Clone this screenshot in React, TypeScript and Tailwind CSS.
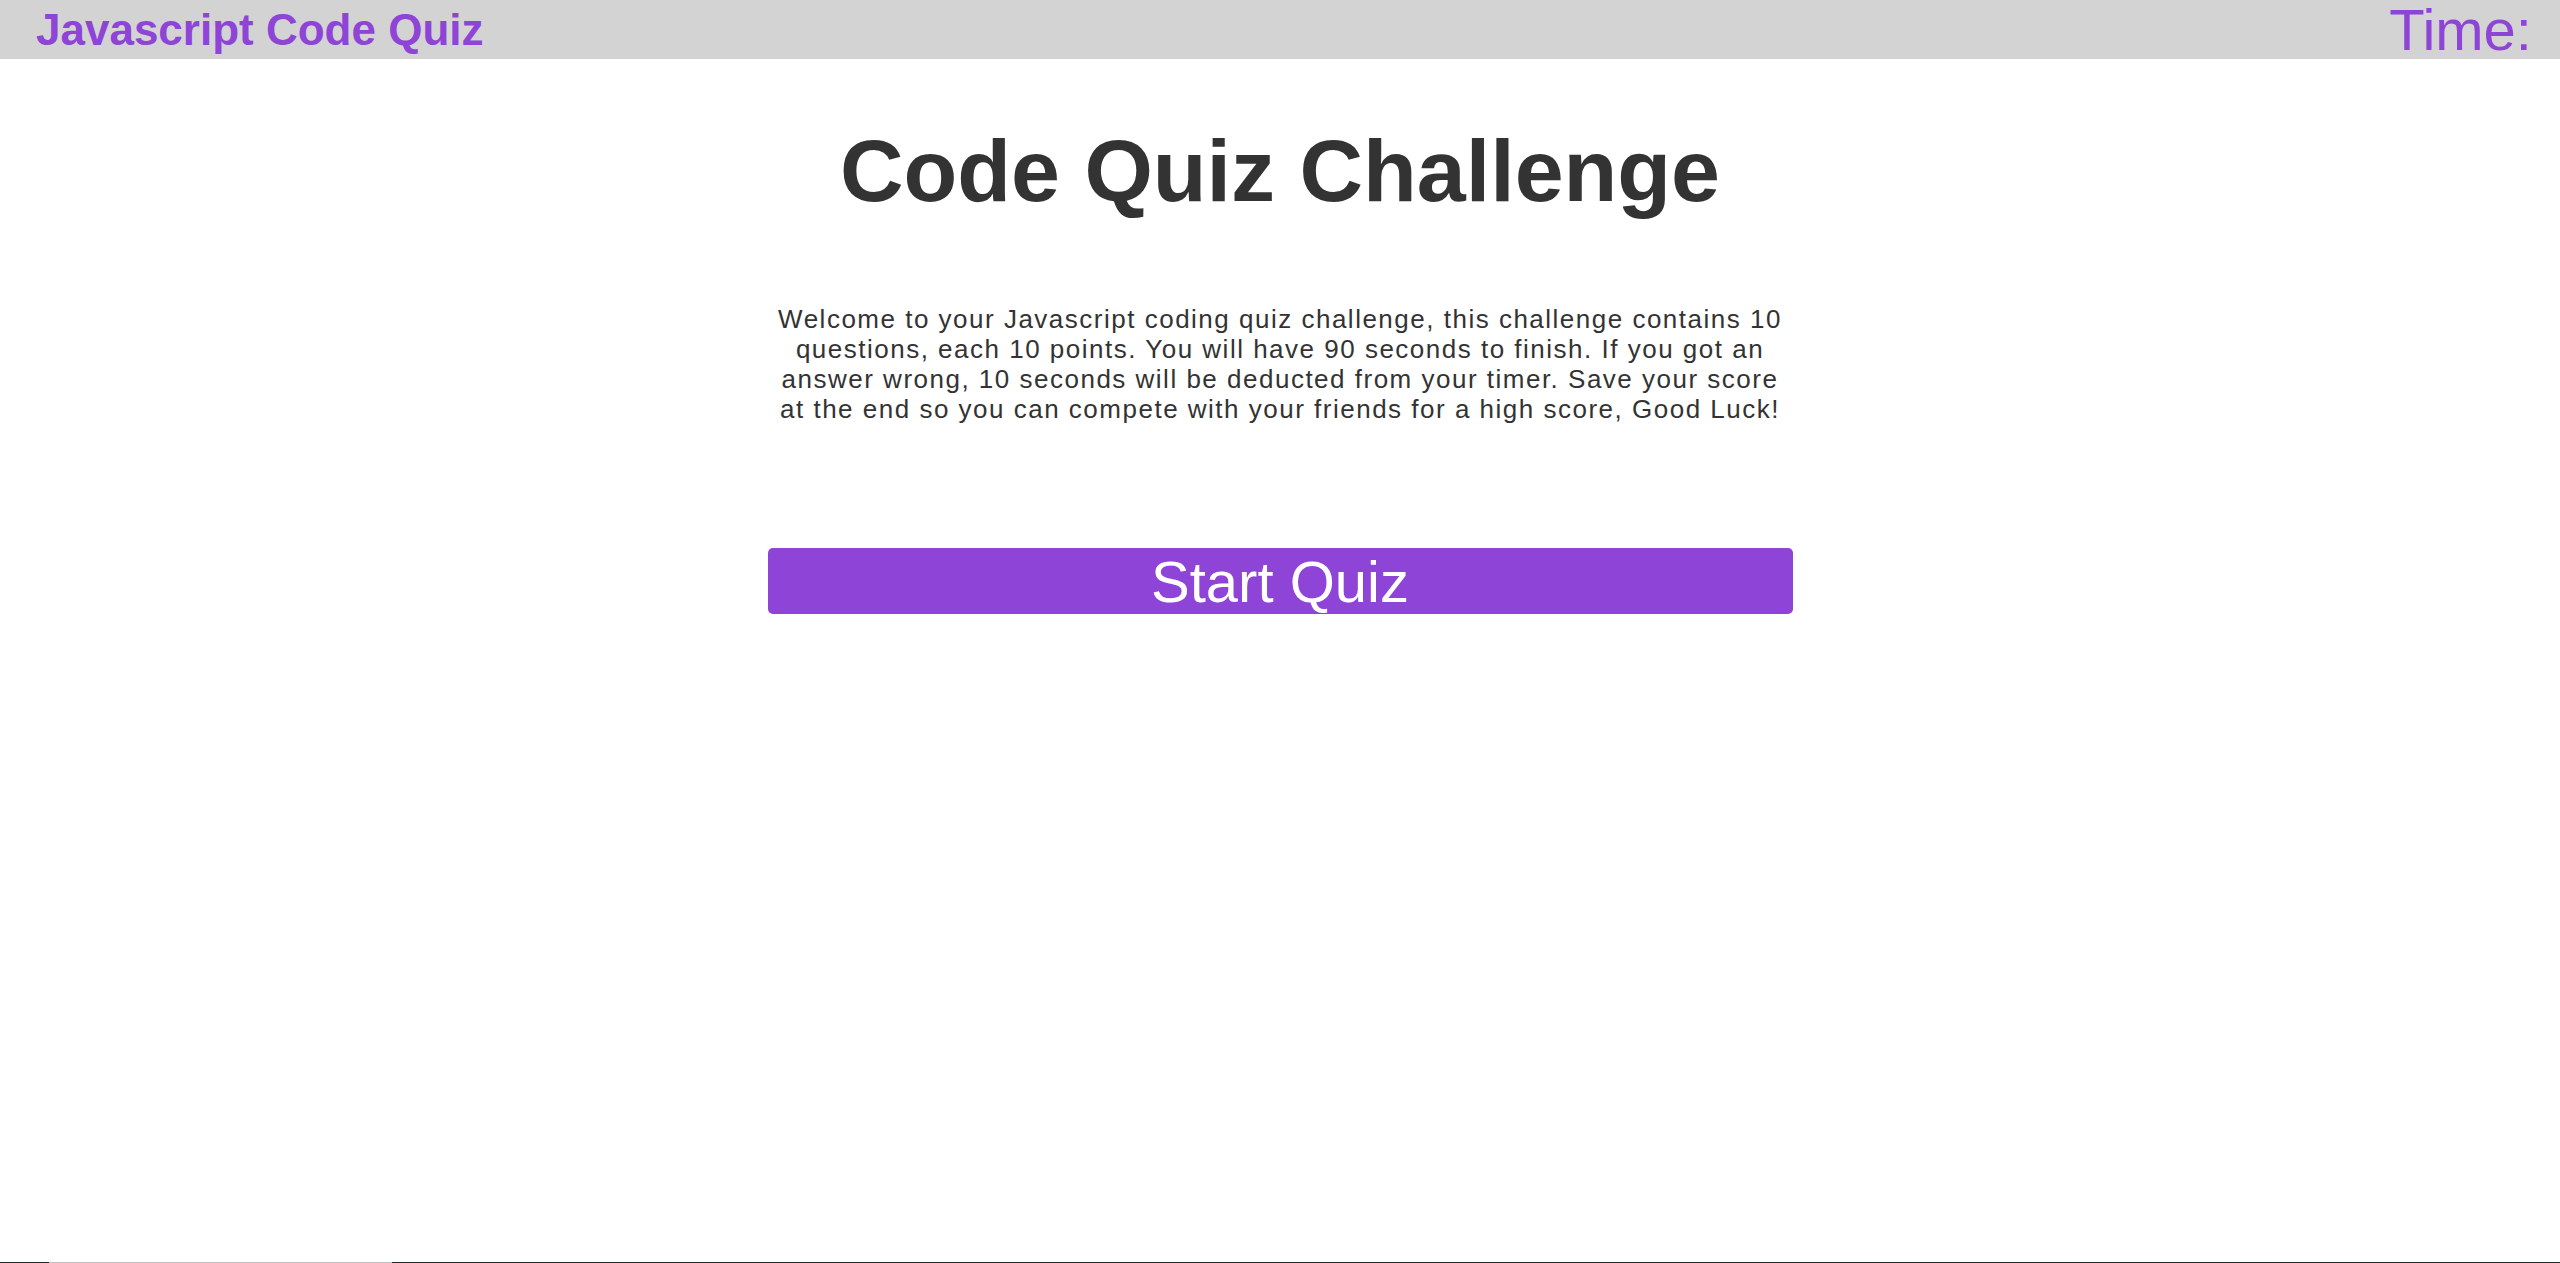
import React from "react";

export default function App() {
  return (
    <div className="min-h-screen flex flex-col bg-white" style={{ fontFamily: '"Liberation Sans", Arial, sans-serif' }}>
      <header className="h-[59px] bg-[#d3d3d3] flex items-center justify-between pl-[36px] pr-[28px] overflow-visible">
        <span className="text-[44px] font-bold text-[#8e44d6] leading-[normal] whitespace-nowrap">Javascript Code Quiz</span>
        <span className="text-[58px] text-[#8e44d6] leading-[normal] whitespace-nowrap">Time:</span>
      </header>
      <main className="flex-1 flex flex-col items-center">
        <h1 className="mt-[61px] text-[88px] font-bold text-[#333333] leading-[normal] text-center">Code Quiz Challenge</h1>
        <div className="w-[1024px] flex flex-col items-center">
          <p className="mt-[82px] text-[26px] tracking-[1.5px] text-[#333333] leading-[30px] text-center">
            Welcome to your Javascript coding quiz challenge, this challenge contains 10 questions, each 10 points. You will have 90 seconds to finish. If you got an answer wrong, 10 seconds will be deducted from your timer. Save your score at the end so you can compete with your friends for a high score, Good Luck!
          </p>
          <button className="mt-[124px] w-[1025px] h-[66px] rounded-[5px] bg-[#8e44d6] text-white text-[58px] leading-[normal] flex items-center justify-center">
            Start Quiz
          </button>
        </div>
      </main>
      <div className="h-px flex">
        <div className="w-[49px] bg-[#1e2a2e]" />
        <div className="w-[343px] bg-[#c0c0c0]" />
        <div className="flex-1 bg-[#1e2a2e]" />
      </div>
    </div>
  );
}
